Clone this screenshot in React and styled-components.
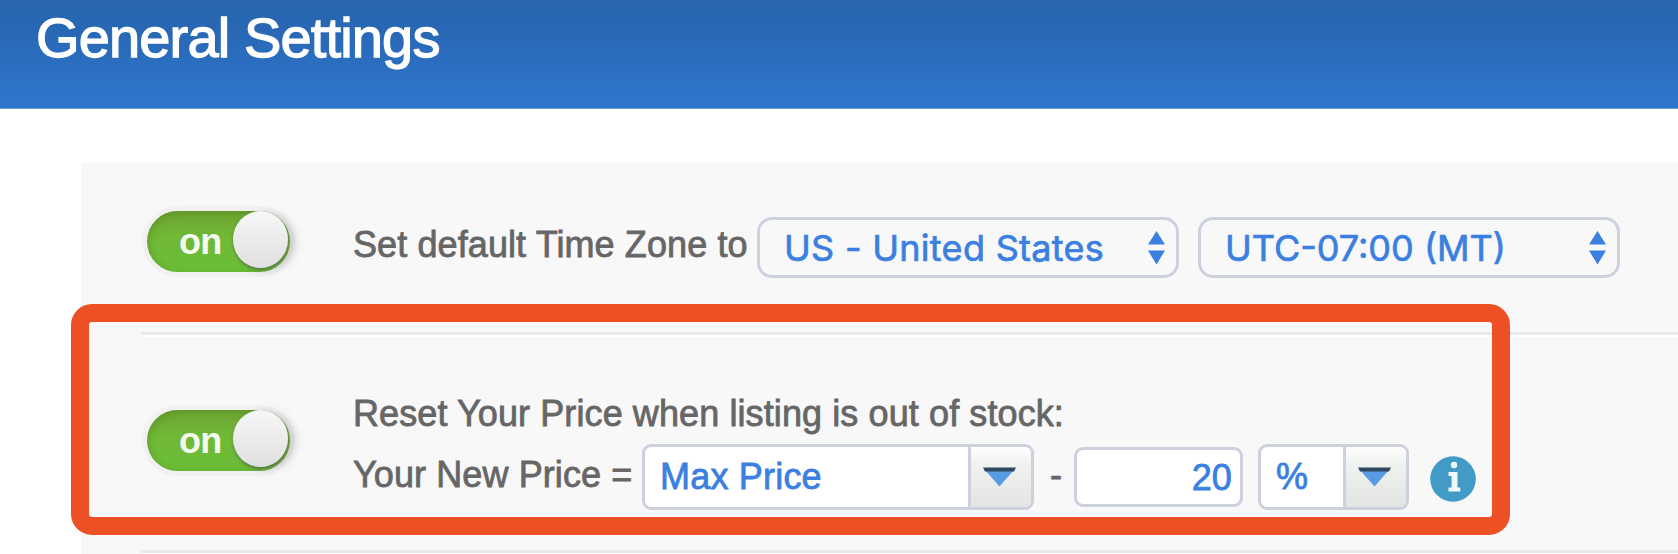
import React from 'react';
import styled, { createGlobalStyle } from 'styled-components';

const SortArrows = () => (
  <svg width="17" height="34" viewBox="0 0 17 34" fill="#3b80e0">
    <path d="M8.5 0 L17 13.5 H0 Z" />
    <path d="M0 19.5 H17 L8.5 33.5 Z" />
  </svg>
);

const Caret = () => (
  <svg width="35" height="20" viewBox="0 0 35 20">
    <path d="M3 3 H32 L17.5 19.5 Z" fill="#5a9ce3" />
    <path d="M1 0.5 H34 L32 4.5 H3 Z" fill="#2f4860" />
  </svg>
);

const InfoIcon = () => (
  <svg width="46" height="46" viewBox="0 0 46 46">
    <circle cx="23" cy="23" r="22.8" fill="#429bc7" />
    <circle cx="24" cy="9" r="3.2" fill="#f2f9fc" />
    <path d="M18.5 16 H27.5 V31.5 H30.3 V35.5 H18.5 V31.5 H21.6 V20 H18.5 Z" fill="#f2f9fc" />
  </svg>
);

const Toggle = () => (
  <Track>
    <TrackLabel>on</TrackLabel>
    <Knob />
  </Track>
);

const App = () => (
  <Page>
    <GlobalStyle />
    <Header>
      <Title>General Settings</Title>
    </Header>

    <Panel>
      <Row $height={172} $top={48}>
        <Toggle />
        <Content $top={6}>
          <Line $height={61}>
            <Label $width={405}>Set default Time Zone to</Label>
            <NativeSelect $spacing={0.3}>
              <span>US - United States</span>
              <SortArrows />
            </NativeSelect>
            <NativeSelect $gap={19} $spacing={0}>
              <span>UTC-07:00 (MT)</span>
              <SortArrows />
            </NativeSelect>
          </Line>
        </Content>
      </Row>

      <Row $height={218} $top={75}>
        <Highlight />
        <Toggle />
        <Content $top={-17}>
          <Caption>Reset Your Price when listing is out of stock:</Caption>
          <Line $height={66}>
            <Label $width={290}>Your New Price =</Label>
            <Dropdown $width={392}>
              <DropdownValue>Max Price</DropdownValue>
              <DropdownButton>
                <Caret />
              </DropdownButton>
            </Dropdown>
            <Minus>-</Minus>
            <Amount>20</Amount>
            <Dropdown $width={151}>
              <DropdownValue>%</DropdownValue>
              <DropdownButton>
                <Caret />
              </DropdownButton>
            </Dropdown>
            <Info>
              <InfoIcon />
            </Info>
          </Line>
        </Content>
      </Row>
    </Panel>
  </Page>
);

// Styled Components
const GlobalStyle = createGlobalStyle`
  * {
    box-sizing: border-box;
  }

  body {
    margin: 0;
    background: #fff;
    overflow: hidden;
  }
`;

const Page = styled.div`
  width: 100%;
  height: 554px;
  overflow: hidden;
  font-family: 'Liberation Sans', Arial, sans-serif;
  font-size: 36px;
  letter-spacing: 0.1px;
  color: #666;
`;

const Header = styled.header`
  height: 109px;
  padding: 7px 0 0 36px;
  background: linear-gradient(#2765ae 0%, #2867b3 25%, #2e75cb 90%, #2e75cb 100%);
  border-bottom: 1px solid #6b9edb;
`;

const Title = styled.h1`
  margin: 0;
  font-size: 56px;
  font-weight: 400;
  line-height: 62px;
  letter-spacing: -0.85px;
  color: #fff;
  -webkit-text-stroke: 1.3px #fff;
`;

const Panel = styled.main`
  height: 391px;
  margin: 54px 0 0 81px;
  padding-left: 60px;
  background: #f8f8f8;
`;

const Row = styled.section`
  position: relative;
  display: flex;
  align-items: flex-start;
  height: ${({ $height }) => $height}px;
  padding-top: ${({ $top }) => $top}px;
  border-bottom: 3px solid #e9e9e9;
  box-shadow: 0 2px 0 #fff;
`;

const Track = styled.div`
  display: flex;
  align-items: center;
  justify-content: space-between;
  flex: none;
  width: 143px;
  height: 61px;
  margin: 0 62px 0 6px;
  padding: 0 2px 0 32px;
  border-radius: 31px;
  background: linear-gradient(#6ea432, #71b936 45%, #6abd38);
  box-shadow: 0 0 0 5px #f1f1f1, inset 2px 2px 7px rgba(60, 110, 20, 0.3);
`;

const TrackLabel = styled.span`
  font-size: 36px;
  font-weight: 700;
  line-height: 40px;
  letter-spacing: -0.8px;
  color: #f4faee;
`;

const Knob = styled.span`
  width: 55px;
  height: 57px;
  margin-bottom: 4px;
  border-radius: 50%;
  background: linear-gradient(#f7f7f7, #e0e0e0);
  box-shadow: 0 2px 3px rgba(80, 80, 80, 0.55), 7px 2px 8px rgba(100, 100, 100, 0.28);
`;

const Content = styled.div`
  flex: none;
  margin-top: ${({ $top }) => $top}px;
`;

const Line = styled.div`
  display: flex;
  align-items: center;
  height: ${({ $height }) => $height}px;
`;

const Caption = styled.div`
  height: 51px;
  padding: 1px 0 0 1px;
  line-height: 40px;
  white-space: nowrap;
  -webkit-text-stroke: 0.8px #666;
`;

const Label = styled.span`
  width: ${({ $width }) => $width}px;
  padding: 0 0 5px 1px;
  line-height: 40px;
  white-space: nowrap;
  -webkit-text-stroke: 0.8px #666;
`;

const NativeSelect = styled.div`
  display: flex;
  align-items: center;
  justify-content: space-between;
  width: 422px;
  height: 61px;
  margin-left: ${({ $gap }) => $gap || 0}px;
  padding: 0 11px 0 24px;
  border: 3px solid #cdd1de;
  border-radius: 15px;
  font-family: Inter, sans-serif;
  font-size: 36px;
  letter-spacing: ${({ $spacing }) => $spacing}px;
  white-space: nowrap;
  color: #3b80e0;
  -webkit-text-stroke: 0.7px #3b80e0;
`;

const Dropdown = styled.div`
  display: flex;
  width: ${({ $width }) => $width}px;
  height: 66px;
  border: 3px solid #cdd1de;
  border-radius: 9px;
  background: #fff;
  overflow: hidden;
`;

const DropdownValue = styled.span`
  flex: 1;
  padding: 7px 0 0 15px;
  line-height: 46px;
  letter-spacing: 0.2px;
  white-space: nowrap;
  color: #3b80e0;
  -webkit-text-stroke: 0.8px #3b80e0;
`;

const DropdownButton = styled.span`
  display: flex;
  justify-content: center;
  width: 63px;
  padding: 20px 3px 0 0;
  border-left: 3px solid #cdd1de;
  background: linear-gradient(#fff, #f1f2f2 25%, #e3e5e5);
`;

const Minus = styled.span`
  width: 40px;
  padding: 0 0 5px 16px;
  line-height: 40px;
  -webkit-text-stroke: 0.8px #666;
`;

const Amount = styled.span`
  width: 169px;
  height: 60px;
  margin-right: 15px;
  padding: 5px 8px 0 0;
  border: 3px solid #cdd1de;
  border-radius: 9px;
  background: #fff;
  line-height: 46px;
  text-align: right;
  color: #3b80e0;
  -webkit-text-stroke: 0.8px #3b80e0;
`;

const Info = styled.span`
  display: flex;
  margin: 4px 0 0 21px;
`;

/* Marker frame drawn over the price row */
const Highlight = styled.div`
  position: absolute;
  top: -31px;
  left: -70px;
  width: 1439px;
  height: 231px;
  border: 18px solid #ee5025;
  border-radius: 21px;
  pointer-events: none;
`;

export default App;
